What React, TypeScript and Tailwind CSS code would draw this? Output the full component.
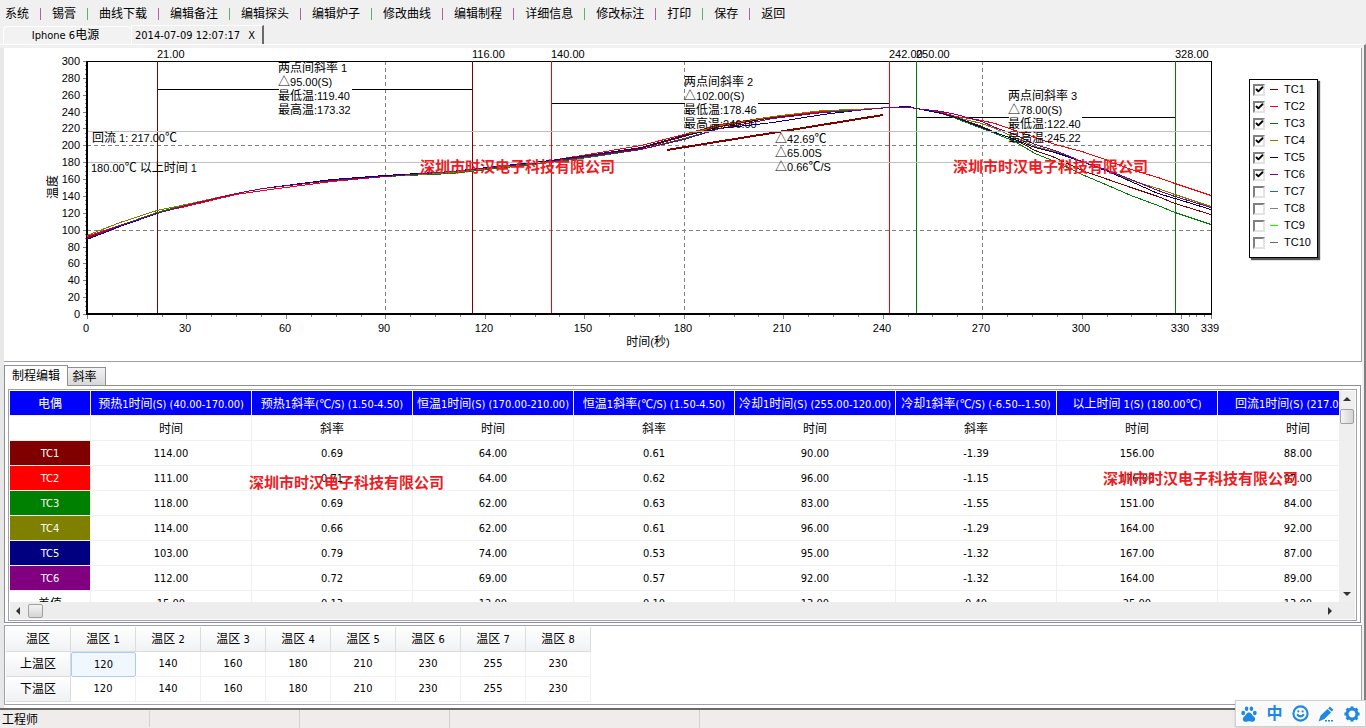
import React from 'react';
import { Check, Smile } from 'lucide-react';

const MENU = [
  '系统', '锡膏', '曲线下载', '编辑备注', '编辑探头', '编辑炉子', '修改曲线',
  '编辑制程', '详细信息', '修改标注', '打印', '保存', '返回',
];
const GREEN_SEPARATORS = [2, 4, 6, 9, 11];

const LEGEND = [
  { name: 'TC1', color: '#800000', on: true },
  { name: 'TC2', color: '#ff0000', on: true },
  { name: 'TC3', color: '#008000', on: true },
  { name: 'TC4', color: '#808000', on: true },
  { name: 'TC5', color: '#000080', on: true },
  { name: 'TC6', color: '#800080', on: true },
  { name: 'TC7', color: '#008080', on: false },
  { name: 'TC8', color: '#808080', on: false },
  { name: 'TC9', color: '#00ff00', on: false },
  { name: 'TC10', color: '#696969', on: false },
];

// sample times in seconds, shared by all probes
const TIMES = [
  0, 10, 21, 30, 45, 53, 74, 90, 110, 140, 151, 167, 180, 191, 207, 222, 232, 242, 248,
  250, 258, 262, 270, 274, 280, 286, 292, 300, 308, 315, 323, 328, 339,
];

const CURVES = [
  { color: '#800000', temps: [91, 106, 121, 129, 143, 149, 159, 164, 168, 182, 187, 197, 211, 223, 234, 240, 243, 246, 246, 244, 239, 234, 223, 216, 207, 195, 186, 171, 160, 151, 140, 132, 118] },
  { color: '#ff0000', temps: [92, 106, 121, 128, 142, 147, 158, 164, 169, 183, 190, 200, 214, 225, 235, 241, 243, 246, 246, 244, 239, 235, 230, 226, 218, 210, 202, 193, 183, 172, 163, 155, 141] },
  { color: '#008000', temps: [90, 105, 121, 130, 144, 150, 160, 164, 167, 180, 186, 196, 209, 221, 233, 240, 243, 246, 246, 244, 238, 233, 221, 215, 205, 191, 182, 166, 153, 141, 129, 121, 107] },
  { color: '#808000', temps: [94, 109, 123, 130, 144, 149, 159, 164, 168, 181, 188, 198, 212, 224, 235, 242, 243, 245, 246, 244, 238, 234, 226, 220, 210, 199, 193, 181, 170, 159, 149, 142, 128] },
  { color: '#000080', temps: [89, 104, 120, 129, 144, 150, 160, 165, 170, 183, 189, 198, 212, 220, 228, 237, 242, 246, 247, 244, 238, 234, 222, 216, 207, 198, 192, 182, 170, 158, 144, 137, 125] },
  { color: '#800080', temps: [90, 105, 120, 129, 143, 149, 159, 164, 169, 182, 187, 196, 208, 220, 233, 239, 242, 245, 246, 244, 241, 237, 229, 222, 214, 202, 195, 182, 171, 160, 147, 140, 127] },
];

const MARKERS = [
  { at: 21, color: '#800000' },
  { at: 116, color: '#800000' },
  { at: 140, color: '#ff0000' },
  { at: 242, color: '#ff0000' },
  { at: 250, color: '#008000' },
  { at: 328, color: '#008000' },
];

const SLOPES = [
  { from: 21, to: 116, y: 89, x: 278, lines: ['两点间斜率 1', '△95.00(S)', '最低温:119.40', '最高温:173.32'] },
  { from: 140, to: 242, y: 103, x: 684, lines: ['两点间斜率 2', '△102.00(S)', '最低温:178.46', '最高温:246.00'] },
  { from: 250, to: 328, y: 117, x: 1008, lines: ['两点间斜率 3', '△78.00(S)', '最低温:122.40', '最高温:245.22'] },
];

const COLUMNS = [
  { title: '预热1时间(S) (40.00-170.00)', kind: '时间' },
  { title: '预热1斜率(℃/S) (1.50-4.50)', kind: '斜率' },
  { title: '恒温1时间(S) (170.00-210.00)', kind: '时间' },
  { title: '恒温1斜率(℃/S) (1.50-4.50)', kind: '斜率' },
  { title: '冷却1时间(S) (255.00-120.00)', kind: '时间' },
  { title: '冷却1斜率(℃/S) (-6.50--1.50)', kind: '斜率' },
  { title: '以上时间 1(S) (180.00℃)', kind: '时间' },
  { title: '回流1时间(S) (217.00℃)', kind: '时间' },
];

const ROWS = [
  { name: 'TC1', cell: 'bg-[#800000] text-white', values: ['114.00', '0.69', '64.00', '0.61', '90.00', '-1.39', '156.00', '88.00'] },
  { name: 'TC2', cell: 'bg-[#ff0000] text-white', values: ['111.00', '0.71', '64.00', '0.62', '96.00', '-1.15', '176.00', '97.00'] },
  { name: 'TC3', cell: 'bg-[#008000] text-white', values: ['118.00', '0.69', '62.00', '0.63', '83.00', '-1.55', '151.00', '84.00'] },
  { name: 'TC4', cell: 'bg-[#808000] text-white', values: ['114.00', '0.66', '62.00', '0.61', '96.00', '-1.29', '164.00', '92.00'] },
  { name: 'TC5', cell: 'bg-[#000080] text-white', values: ['103.00', '0.79', '74.00', '0.53', '95.00', '-1.32', '167.00', '87.00'] },
  { name: 'TC6', cell: 'bg-[#800080] text-white', values: ['112.00', '0.72', '69.00', '0.57', '92.00', '-1.32', '164.00', '89.00'] },
  { name: '差值', cell: 'bg-white text-black', values: ['15.00', '0.13', '12.00', '0.10', '13.00', '0.40', '25.00', '13.00'] },
];

const ZONES = [
  { name: '上温区', temps: [120, 140, 160, 180, 210, 230, 255, 230] },
  { name: '下温区', temps: [120, 140, 160, 180, 210, 230, 255, 230] },
];

const COMPANY = '深圳市时汉电子科技有限公司';

// Chinese runs are set one pixel larger than the Latin ones
const CJK = /([℃△\u4e00-\u9fff]+)/;

const Mixed: React.FC<{ text: string }> = ({ text }) => (
  <>
    {text.split(CJK).map((part, i) =>
      i % 2 ? <span key={i} className="text-[12px]">{part}</span> : part
    )}
  </>
);

const ChartText: React.FC<{ x: number; y: number; text: string; anchor?: 'start' | 'middle' | 'end' }> = ({
  x, y, text, anchor = 'start',
}) => (
  <text x={x} y={y} textAnchor={anchor} className="fill-black text-[11px]">
    {text.split(CJK).map((part, i) => (
      <tspan key={i} className={i % 2 ? 'text-[12px]' : 'text-[11px]'}>{part}</tspan>
    ))}
  </text>
);

const LEFT = 87;
const RIGHT = 1211;
const TOP = 61;
const BOTTOM = 314;
const px = (t: number) => Math.round(LEFT + (t * (RIGHT - LEFT)) / 339);
const py = (v: number) => Math.round(BOTTOM - (v * (BOTTOM - TOP)) / 300);

const range = (count: number, step: number) => Array.from({ length: count }, (_, i) => i * step);

const Chart: React.FC = () => (
  <svg
    viewBox="4 48 1237 313"
    className="block w-full h-auto font-['Liberation_Sans','Noto_Sans_CJK_SC',sans-serif]"
    role="img"
    aria-label="炉温曲线"
  >
    <g shapeRendering="crispEdges" fill="none">
      {[100, 200].map((v) => (
        <line key={v} x1={LEFT} x2={RIGHT} y1={py(v) + 0.5} y2={py(v) + 0.5} stroke="#808080" strokeDasharray="4 3" />
      ))}
      {[90, 180, 270].map((t) => (
        <line key={t} x1={px(t) + 0.5} x2={px(t) + 0.5} y1={TOP} y2={BOTTOM} stroke="#808080" strokeDasharray="4 3" />
      ))}
      {range(61, 5).map((v) => (
        <line key={v} x1={v % 20 ? 85 : 83} x2={LEFT} y1={py(v) + 0.5} y2={py(v) + 0.5} stroke="#808080" />
      ))}
      {[...range(45, 7.5), 332.25, 334.5, 336.75, 339].map((t) => (
        <line key={t} x1={px(t) + 0.5} x2={px(t) + 0.5} y1={BOTTOM} y2={t % 30 === 0 || t === 339 ? 319 : 317} stroke="#808080" />
      ))}
      <path d="M87 61.5H1211.5V314" stroke="#000" />
      <path d="M87 61V314H1212" stroke="#000" strokeWidth="2" />

      {SLOPES.map((s) => (
        <g key={s.from}>
          <line x1={px(s.from)} x2={px(s.to)} y1={s.y + 0.5} y2={s.y + 0.5} stroke="#000" />
          <rect x={s.x + 1} y={s.y - 2} width="73" height="6" fill="#fff" />
        </g>
      ))}
      {MARKERS.map((m) => (
        <line key={m.at} x1={px(m.at) + 0.5} x2={px(m.at) + 0.5} y1={TOP} y2={BOTTOM - 1} stroke={m.color} />
      ))}
      {CURVES.map((c) => (
        <polyline key={c.color} points={TIMES.map((t, i) => `${px(t)},${py(c.temps[i]) + 0.5}`).join(' ')} stroke={c.color} />
      ))}
      <line x1={px(175)} y1="150" x2={px(240)} y2="115" stroke="#800000" strokeWidth="2" />
      {[180, 217].map((v) => (
        <line key={v} x1={LEFT + 1} x2={RIGHT} y1={py(v) + 0.5} y2={py(v) + 0.5} stroke="#c0c0c0" />
      ))}
    </g>

    {range(16, 20).map((v) => (
      <ChartText key={v} x={80} y={py(v) + 4} text={String(v)} anchor="end" />
    ))}
    {[...range(12, 30), 339].map((t) => (
      <ChartText key={t} x={px(t) - 1} y={332} text={String(t)} anchor="middle" />
    ))}
    {MARKERS.map((m) => (
      <ChartText key={m.at} x={px(m.at)} y={58} text={m.at.toFixed(2)} />
    ))}
    {SLOPES.map((s) =>
      s.lines.map((line, i) => (
        <ChartText key={line} x={s.x} y={s.y - 17 + i * 14} text={line} />
      ))
    )}
    {['△42.69℃', '△65.00S', '△0.66℃/S'].map((line, i) => (
      <ChartText key={line} x={775} y={143 + i * 14} text={line} />
    ))}
    <ChartText x={92} y={142} text="回流 1: 217.00℃" />
    <ChartText x={91} y={172} text="180.00℃ 以上时间 1" />
    <ChartText x={648} y={346} text="时间(秒)" anchor="middle" />
    <text transform="rotate(-90 57 187)" x="57" y="187" textAnchor="middle" className="text-[12px]">温度</text>
    <text x="420" y="172" className="fill-[#ed1c24] text-[15px] font-bold">{COMPANY}</text>
    <text x="953" y="172" className="fill-[#ed1c24] text-[15px] font-bold">{COMPANY}</text>
  </svg>
);

const Legend: React.FC = () => (
  <div className="w-[120px] shrink-0 pl-2 pt-[31px] font-['Liberation_Sans',sans-serif]">
    <div className="w-[69px] border border-black bg-white pl-[3px] pt-px pb-[6px] shadow-[2px_2px_1px_#555]">
      {LEGEND.map((item) => (
        <label key={item.name} className="relative flex h-[17px] items-center text-[11px] leading-none">
          <input
            type="checkbox"
            defaultChecked={item.on}
            className="peer size-3 shrink-0 appearance-none border-2 border-t-[#808080] border-l-[#808080] border-r-[#e3e3e3] border-b-[#e3e3e3] bg-white"
          />
          <Check className="absolute left-[2px] hidden size-[9px] peer-checked:block" strokeWidth={5} />
          <svg className="ml-[5px] mr-[6px] h-px w-2 shrink-0" aria-hidden="true">
            <rect width="8" height="1" fill={item.color} />
          </svg>
          {item.name}
        </label>
      ))}
    </div>
  </div>
);

const ProcessTable: React.FC = () => (
  <div className="relative min-w-0 flex-1 h-[211px] overflow-hidden">
    <table className="w-[1369px] table-fixed border-separate border-spacing-0 text-center whitespace-nowrap">
      <colgroup>
        <col className="w-[81px]" />
        {COLUMNS.map((c) => (
          <col key={c.title} className="w-[161px]" />
        ))}
      </colgroup>
      <thead>
        <tr className="h-[25px] bg-[#0000ff] text-white">
          <th className="border-r border-b border-[#f0f0f0] p-0 pt-[2px] font-normal"><Mixed text="电偶" /></th>
          {COLUMNS.map((c) => (
            <th key={c.title} className="border-r border-b border-[#f0f0f0] p-0 pt-[2px] font-normal">
              <Mixed text={c.title} />
            </th>
          ))}
        </tr>
      </thead>
      <tbody>
        <tr className="h-[25px]">
          <td className="border-r border-b border-[#f0f0f0] p-0" />
          {COLUMNS.map((c) => (
            <td key={c.title} className="border-r border-b border-[#f0f0f0] p-0 pt-[2px]"><Mixed text={c.kind} /></td>
          ))}
        </tr>
        {ROWS.map((row) => (
          <tr key={row.name} className="h-[25px]">
            <th className={`border-r border-b border-[#f0f0f0] p-0 pt-[2px] font-normal ${row.cell}`}>
              <Mixed text={row.name} />
            </th>
            {row.values.map((value, i) => (
              <td key={i} className="border-r border-b border-[#f0f0f0] p-0 pt-[2px]">{value}</td>
            ))}
          </tr>
        ))}
      </tbody>
    </table>
    <span className="absolute left-[239px] top-[82px] text-[15px] leading-5 font-bold text-[#ed1c24]">{COMPANY}</span>
    <span className="absolute left-[1093px] top-[78px] text-[15px] leading-5 font-bold text-[#ed1c24]">{COMPANY}</span>
  </div>
);

const Arrow: React.FC<{ d: string }> = ({ d }) => (
  <svg viewBox="0 0 8 8" className="size-2" aria-hidden="true"><path d={d} fill="#333" /></svg>
);

const PawIcon: React.FC = () => (
  <svg viewBox="0 0 16 16" className="size-4" fill="currentColor" aria-hidden="true">
    <ellipse cx="2.2" cy="7" rx="1.9" ry="2.2" />
    <ellipse cx="5.6" cy="2.8" rx="1.8" ry="2.3" />
    <ellipse cx="10.4" cy="2.8" rx="1.8" ry="2.3" />
    <ellipse cx="13.8" cy="7" rx="1.9" ry="2.2" />
    <path d="M8 6.4C10.6 6.4 11 9 13 10.8C15.4 13 13.8 15.8 11.4 15.8C10 15.8 9.4 15.3 8 15.3C6.6 15.3 6 15.8 4.6 15.8C2.2 15.8.6 13 3 10.8C5 9 5.4 6.4 8 6.4Z" />
  </svg>
);

const PenIcon: React.FC = () => (
  <svg viewBox="0 0 16 16" className="size-4" fill="currentColor" aria-hidden="true">
    <path d="M11.8.6L15.4 3.8L13.8 5.6L10.2 2.4ZM9.5 3.1L13.1 6.4L6.4 13L.6 15.4L2.6 9.6Z" />
    <path d="M7 14H9V15.4H7ZM10 14H12V15.4H10ZM13 14H15V15.4H13Z" />
  </svg>
);

const GearIcon: React.FC = () => (
  <svg viewBox="0 0 16 16" className="size-4" fill="none" stroke="currentColor" aria-hidden="true">
    <circle cx="8" cy="8" r="4.9" strokeWidth="3" />
    {range(8, 45).map((deg) => (
      <path key={deg} d="M8 .4V2.6" strokeWidth="3" transform={`rotate(${deg} 8 8)`} />
    ))}
  </svg>
);

const InputBar: React.FC = () => (
  <div className="absolute right-0 bottom-px flex h-[27px] w-[131px] items-center justify-between border border-[#d0d0d0] bg-[#fafafa] px-[5px] text-[#1e88e5] shadow">
    <button type="button" aria-label="百度"><PawIcon /></button>
    <button type="button" aria-label="中文" className="text-[16px] leading-none font-bold">中</button>
    <button type="button" aria-label="表情"><Smile className="size-[17px]" strokeWidth={3} /></button>
    <button type="button" aria-label="手写"><PenIcon /></button>
    <button type="button" aria-label="设置"><GearIcon /></button>
  </div>
);

const App: React.FC = () => {
  return (
    <div className="relative flex min-h-screen flex-col bg-[#f0f0f0] text-[11px] leading-[14px] text-black font-['DejaVu_Sans_Condensed','Noto_Sans','Noto_Sans_CJK_SC',sans-serif]">
      <nav className="flex h-[25px] items-center gap-[11px] pl-[5px] pt-[3px] text-[12px]">
        {MENU.map((item, i) => (
          <React.Fragment key={item}>
            {i > 0 && (
              <span className={GREEN_SEPARATORS.includes(i) ? 'h-3 w-px bg-[#5cb06c]' : 'h-3 w-px bg-[#b060a0]'} />
            )}
            <button type="button" className="whitespace-nowrap">{item}</button>
          </React.Fragment>
        ))}
      </nav>

      <div className="flex h-[19px] items-end pl-[3px]">
        <button type="button" className="h-[18px] w-32 rounded-t-sm border-t border-l border-white bg-[#f2f2f2] pb-px pr-1">
          <Mixed text="Iphone 6电源" />
        </button>
        <button type="button" className="flex h-[19px] w-[133px] items-center justify-between border-t border-l border-white border-r-2 border-r-[#696969] pl-[3px] pt-[2px] pr-[7px]">
          <span>2014-07-09 12:07:17</span>
          <span>X</span>
        </button>
      </div>

      <main className="flex flex-1 flex-col border-t border-t-white border-r-2 border-r-[#808080] pt-[3px] pr-[2px]">
        <div className="flex flex-1 flex-col border-l-4 border-[#e8e8e8] bg-white">
          <section className="flex border-r border-b border-[#a0a0a0]">
            <div className="min-w-0 flex-1"><Chart /></div>
            <Legend />
          </section>

          <section className="pt-[3px] pr-px">
            <div className="flex items-end">
              <button type="button" className="relative z-10 -mb-px h-[21px] w-16 border border-b-0 border-[#8c8e98] bg-white text-[12px]">制程编辑</button>
              <button type="button" className="h-[18px] w-[38px] border border-b-0 border-l-0 border-[#8c8e98] bg-linear-to-b from-[#f2f2f2] to-[#d8d8d8] pr-1 text-[12px]">斜率</button>
            </div>
            <div className="border border-[#8c8e98] p-[3px] pb-px">
              <div className="border border-[#a0a0a8] p-px">
                <div className="flex">
                  <ProcessTable />
                  <div className="flex w-4 shrink-0 flex-col items-center bg-[#efefef] py-1">
                    <Arrow d="M0 6L4 2L8 6Z" />
                    <div className="mt-[6px] h-[15px] w-[14px] rounded-xs border border-[#a0a0a0] bg-linear-to-r from-[#f4f4f4] to-[#d4d4d4]" />
                    <div className="mt-auto"><Arrow d="M0 2L4 6L8 2Z" /></div>
                  </div>
                </div>
                <div className="flex h-[17px] items-center bg-[#ededed] pl-1 pr-[21px]">
                  <Arrow d="M6 0L2 4L6 8Z" />
                  <div className="ml-[6px] h-[14px] w-[15px] rounded-xs border border-[#a0a0a0] bg-linear-to-b from-[#f4f4f4] to-[#d4d4d4]" />
                  <div className="ml-auto"><Arrow d="M2 0L6 4L2 8Z" /></div>
                </div>
              </div>
            </div>
          </section>

          <section className="mt-[2px] border border-[#a0a0a8] p-px pb-[2px]">
            <table className="w-[585px] table-fixed border-separate border-spacing-0 text-center">
              <thead>
                <tr className="h-[25px] bg-linear-to-b from-white to-[#eff1f3]">
                  <th className="border-r border-b border-[#dcdcdc] p-0 font-normal"><Mixed text="温区" /></th>
                  {ZONES[0].temps.map((_, i) => (
                    <th key={i} className="border-r border-b border-[#dcdcdc] p-0 font-normal">
                      <Mixed text={`温区 ${i + 1}`} />
                    </th>
                  ))}
                </tr>
              </thead>
              <tbody>
                {ZONES.map((zone, row) => (
                  <tr key={zone.name} className="h-[25px]">
                    <th className="border-r border-b border-[#dcdcdc] bg-linear-to-b from-white to-[#eff1f3] p-0 font-normal">
                      <Mixed text={zone.name} />
                    </th>
                    {zone.temps.map((temp, i) => (
                      <td
                        key={i}
                        className={
                          row === 0 && i === 0
                            ? 'rounded-xs border border-[#a9cdf5] bg-[#f1f7fe] p-0'
                            : 'border-r border-b border-[#f0f0f0] p-0'
                        }
                      >
                        {temp}
                      </td>
                    ))}
                  </tr>
                ))}
              </tbody>
            </table>
          </section>
        </div>
      </main>

      <footer className="flex h-5 items-center border-t-2 border-[#696969] bg-[#f0ecec] text-[12px]">
        <span className="w-[150px] border-r border-[#d4d0d0] pl-[2px] pt-[2px]">工程师</span>
        <span className="h-full w-[150px] border-r border-[#d4d0d0]" />
        <span className="h-full w-[150px] border-r border-[#d4d0d0]" />
        <span className="h-full w-[250px] border-r border-[#d4d0d0]" />
      </footer>
      <InputBar />
    </div>
  );
};

export default App;
